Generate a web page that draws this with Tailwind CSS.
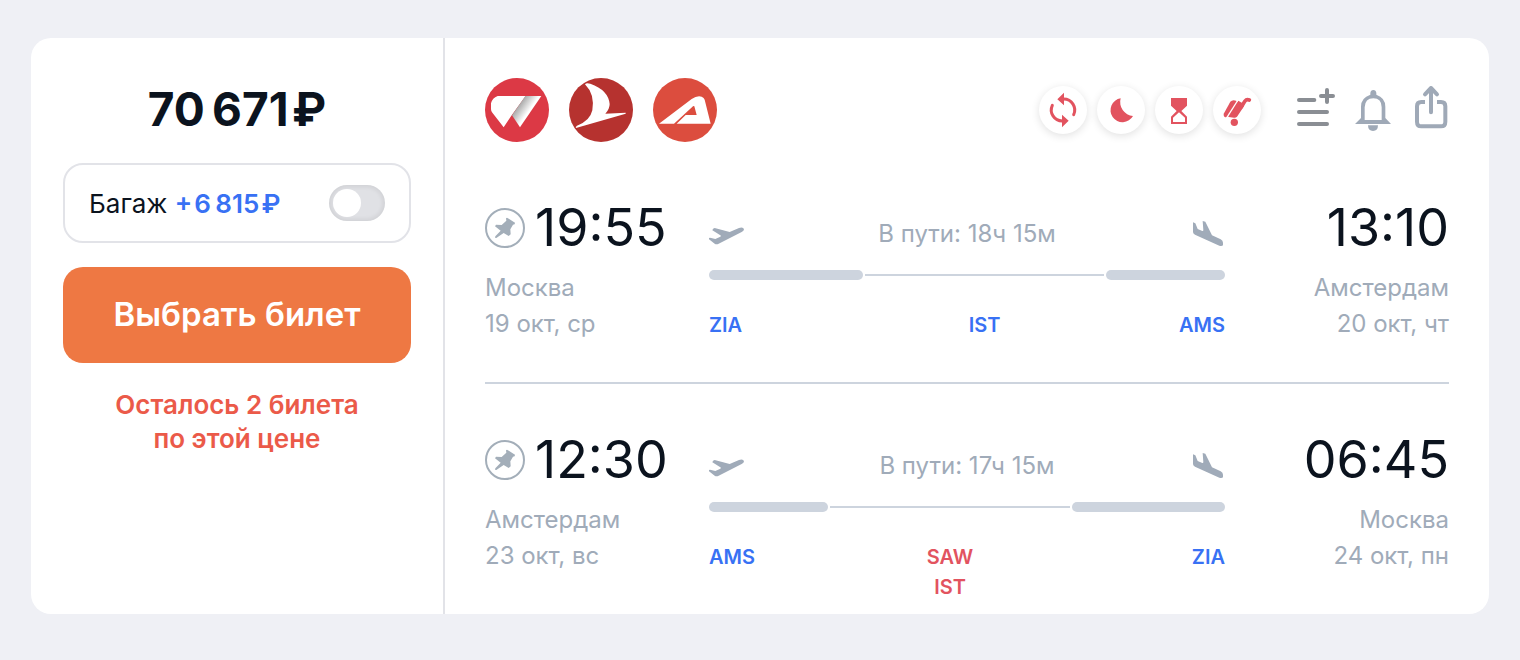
<!DOCTYPE html>
<html lang="ru">
<head>
  <meta charset="UTF-8" />
  <meta name="viewport" content="width=device-width, initial-scale=1.0"/>
  <script src="https://cdn.jsdelivr.net/npm/@tailwindcss/browser@4"></script>
  <title>Билет Москва — Амстердам</title>
</head>
<body class="bg-[#eff0f5] text-[#0b131e] font-['Inter',sans-serif] min-h-screen px-[31px] py-[38px]">
  <svg class="hidden">
    <symbol id="pin" viewBox="0 0 120 120">
      <circle cx="60" cy="60" r="57" fill="none" stroke="currentColor" stroke-width="6"/>
      <path fill="currentColor" d="M66 29l24 15-1 5-5 1-8 14 1 15-6 5-15-9-22 15-4-1 1-4 16-17-17-13 3-5 17 1 14-13-1-7z"/>
    </symbol>
    <symbol id="takeoff" viewBox="0 0 108 108" overflow="visible">
      <path fill="currentColor" d="M-3 67l6-2 16 4 15-7q3-2 0-4l-24-15q1-6 7-7l45 12 28-12q13-4 15 4 0 5-7 8l-69 35q-7 3-12 0z"/>
    </symbol>
    <symbol id="landing" viewBox="0 0 108 108" overflow="visible">
      <path fill="currentColor" d="M12 19l7 3 7 17 14 6q3 1 3-3l-2-27 8 2 20 41 26 12q7 4 7 10v8q-4 4-11 1l-73-33q-6-3-6-8z"/>
    </symbol>
  </svg>

  <main class="bg-white rounded-[20px] flex">
    <section class="w-[414px] shrink-0 border-r-2 border-[#e2e3e8] px-8 pt-10 text-center">
      <h1 class="text-[46px] leading-[63px] font-bold">70&thinsp;671&hairsp;₽</h1>

      <label class="mt-[22px] h-20 px-6 flex items-center justify-between border-2 border-[#e2e3e8] rounded-[20px] text-[26px]">
        <span>Багаж <span class="font-semibold text-[#3871f4]">+&hairsp;6&thinsp;815&hairsp;₽</span></span>
        <input type="checkbox" class="appearance-none w-14 h-9 p-1 rounded-full bg-[#e0e1e5] shadow-[inset_0_0_4px_2px_rgba(0,0,0,0.07)] before:block before:size-7 before:rounded-full before:bg-white checked:bg-[#3871f4] checked:before:ml-5" />
      </label>

      <button type="button" class="mt-6 w-full h-24 rounded-[20px] bg-[#ee7843] text-white text-[33px] font-semibold">Выбрать билет</button>

      <p class="mt-[25px] text-[26px] leading-[34px] font-semibold text-[#eb5a49]">Осталось 2 билета<br>по этой цене</p>
    </section>

    <section class="flex-1 px-10 pt-10 pb-3">
      <header class="flex items-center justify-between">
        <div class="flex gap-5">
          <svg class="size-16" viewBox="0 0 192 192">
            <defs>
              <linearGradient id="fold" x1="98" y1="80" x2="130" y2="102" gradientUnits="userSpaceOnUse">
                <stop offset="0" stop-color="#a0a0a0"/>
                <stop offset="1" stop-color="#fff"/>
              </linearGradient>
            </defs>
            <circle cx="96" cy="96" r="96" fill="#dc3945"/>
            <path fill="#fff" d="M38 54h84L80 112 56 148 21 103q-3-4-3-10V76q4-16 20-22z"/>
            <path fill="url(#fold)" d="M121 54h48l-64 94-24-36z"/>
          </svg>
          <svg class="size-16" viewBox="0 0 192 192">
            <circle cx="96" cy="96" r="96" fill="#b6322f"/>
            <path fill="#fff" d="M48 19q4-6 16-2 54 19 58 61 0 15-13 29l61-3v3L21 150q-3-3 3-7 39-14 46-46 8-48-22-78z"/>
          </svg>
          <svg class="size-16" viewBox="0 0 192 192">
            <circle cx="96" cy="96" r="96" fill="#dc4d3e"/>
            <path fill="#fff" d="M18 137l98-74q16-11 30-7 7 3 9 9l18 72H71l27-26h33l-7-26q-2-2-4 0l-57 52z"/>
          </svg>
        </div>

        <div class="flex items-center gap-9">
          <div class="flex gap-[10px] text-[#e2535f]">
            <div class="size-12 rounded-full bg-white shadow-[0_2px_8px_rgba(0,0,0,0.12)]">
              <svg class="size-12" viewBox="0 0 144 144" fill="currentColor">
                <path fill="none" stroke="currentColor" stroke-width="9" stroke-linecap="round" d="M74 39a33 33 0 0 1 30 47M70 105a33 33 0 0 1-30-47"/>
                <path d="M75 20v38L55 40zM69 124V86l20 18z"/>
              </svg>
            </div>
            <div class="size-12 rounded-full bg-white shadow-[0_2px_8px_rgba(0,0,0,0.12)]">
              <svg class="size-12" viewBox="0 0 144 144" fill="currentColor">
                <path d="M71 37a36 36 0 1 0 37 53 42 42 0 0 1-37-53z"/>
              </svg>
            </div>
            <div class="size-12 rounded-full bg-white shadow-[0_2px_8px_rgba(0,0,0,0.12)]">
              <svg class="size-12" viewBox="0 0 144 144" fill="currentColor">
                <path fill-rule="evenodd" d="M48 36h48v23L79 75l17 17v22H48V92l17-17-17-16zM54 108h36V95L72 79 54 95z"/>
              </svg>
            </div>
            <div class="size-12 rounded-full bg-white shadow-[0_2px_8px_rgba(0,0,0,0.12)]">
              <svg class="size-12" viewBox="0 0 144 144" fill="currentColor">
                <path d="M52 47q7-8 19-2l1 5-27 42q-6 3-11 0-4-4-1-10z"/>
                <path d="M76 44l18 11-1 6-21 31q-4 4-9 3l-16-2q-6-2-4-8z"/>
                <path fill="none" stroke="currentColor" stroke-width="11" stroke-linecap="round" d="M84 64l12-19q5-7 13-3"/>
                <path stroke="#fff" stroke-width="4" d="M75 42L40 97"/>
                <circle cx="64" cy="109" r="11"/>
              </svg>
            </div>
          </div>

          <div class="flex gap-[18px] -mr-1">
            <button type="button" aria-label="Добавить в список" class="text-[#8a8e94]">
              <svg class="size-10" viewBox="0 0 120 120" overflow="visible" fill="none" stroke="currentColor" stroke-width="12" stroke-linecap="round">
                <path d="M6 30h46M6 66h84M6 102h84M90 0v36M72 18h36"/>
              </svg>
            </button>
            <button type="button" aria-label="Следить за ценой" class="text-[#9fa9b7]">
              <svg class="size-10" viewBox="0 0 120 120" overflow="visible" fill="currentColor">
                <path fill-rule="evenodd" d="M0 102l18-18V50q0-27 28-36V9q1-9 9-9t9 9v5q27 9 27 36v34l17 18zM29 90h51V52q0-27-25-27T29 52z"/>
                <path d="M39 106h30q0 17-15 17t-15-17z"/>
              </svg>
            </button>
            <button type="button" aria-label="Поделиться" class="text-[#9fa9b7]">
              <svg class="size-10" viewBox="0 0 120 120" overflow="visible" fill="none" stroke="currentColor" stroke-width="12">
                <path d="M36 36H25q-13 0-13 13v46q0 14 13 14h59q13 0 13-14V49q0-13-13-13H72"/>
                <path stroke-linecap="round" stroke-linejoin="round" d="M54 67V-6M36 13L54-6l18 19"/>
              </svg>
            </button>
          </div>
        </div>
      </header>

      <!-- туда -->
      <article class="mt-[54px] grid grid-cols-[224px_1fr_224px] text-2xl leading-9 text-[#a0abb9]">
        <div>
          <div class="flex items-center gap-[10px]">
            <button type="button" aria-label="Закрепить рейс"><svg class="size-10 text-[#a3aeb9]"><use href="#pin"/></svg></button>
            <time class="text-[52px] leading-16 text-[#0b131e]">19:55</time>
          </div>
          <p class="mt-[10px]">Москва</p>
          <p>19 окт, ср</p>
        </div>
        <div class="pt-5">
          <div class="flex justify-between">
            <svg class="size-9"><use href="#takeoff"/></svg>
            <p>В пути: 18ч 15м</p>
            <svg class="size-9"><use href="#landing"/></svg>
          </div>
          <div class="mt-[18px] flex items-center gap-[2px]">
            <div class="flex-[154] h-[10px] rounded-full bg-[#cdd4de]"></div>
            <div class="flex-[239] h-[2px] bg-[#cdd4de]"></div>
            <div class="flex-[119] h-[10px] rounded-full bg-[#cdd4de]"></div>
          </div>
          <div class="mt-[30px] flex gap-[2px] text-xl leading-[30px] font-semibold text-[#3871f4]">
            <p class="flex-[154]">ZIA</p>
            <p class="flex-[239] text-center">IST</p>
            <p class="flex-[119] text-right">AMS</p>
          </div>
        </div>
        <div class="text-right">
          <time class="block text-[52px] leading-16 text-[#0b131e]">13:10</time>
          <p class="mt-[10px]">Амстердам</p>
          <p>20 окт, чт</p>
        </div>
      </article>

      <hr class="mt-10 mb-11 border-t-2 border-[#cdd4de]" />

      <!-- обратно -->
      <article class="grid grid-cols-[224px_1fr_224px] text-2xl leading-9 text-[#a0abb9]">
        <div>
          <div class="flex items-center gap-[10px]">
            <button type="button" aria-label="Закрепить рейс"><svg class="size-10 text-[#a3aeb9]"><use href="#pin"/></svg></button>
            <time class="text-[52px] leading-16 text-[#0b131e]">12:30</time>
          </div>
          <p class="mt-[10px]">Амстердам</p>
          <p>23 окт, вс</p>
        </div>
        <div class="pt-5">
          <div class="flex justify-between">
            <svg class="size-9"><use href="#takeoff"/></svg>
            <p>В пути: 17ч 15м</p>
            <svg class="size-9"><use href="#landing"/></svg>
          </div>
          <div class="mt-[18px] flex items-center gap-[2px]">
            <div class="flex-[119] h-[10px] rounded-full bg-[#cdd4de]"></div>
            <div class="flex-[240] h-[2px] bg-[#cdd4de]"></div>
            <div class="flex-[153] h-[10px] rounded-full bg-[#cdd4de]"></div>
          </div>
          <div class="mt-[30px] flex gap-[2px] text-xl leading-[30px] font-semibold text-[#3871f4]">
            <p class="flex-[119]">AMS</p>
            <p class="flex-[240] text-center text-[#e2535f]">SAW<br>IST</p>
            <p class="flex-[153] text-right">ZIA</p>
          </div>
        </div>
        <div class="text-right">
          <time class="block text-[52px] leading-16 text-[#0b131e]">06:45</time>
          <p class="mt-[10px]">Москва</p>
          <p>24 окт, пн</p>
        </div>
      </article>
    </section>
  </main>
</body>
</html>
